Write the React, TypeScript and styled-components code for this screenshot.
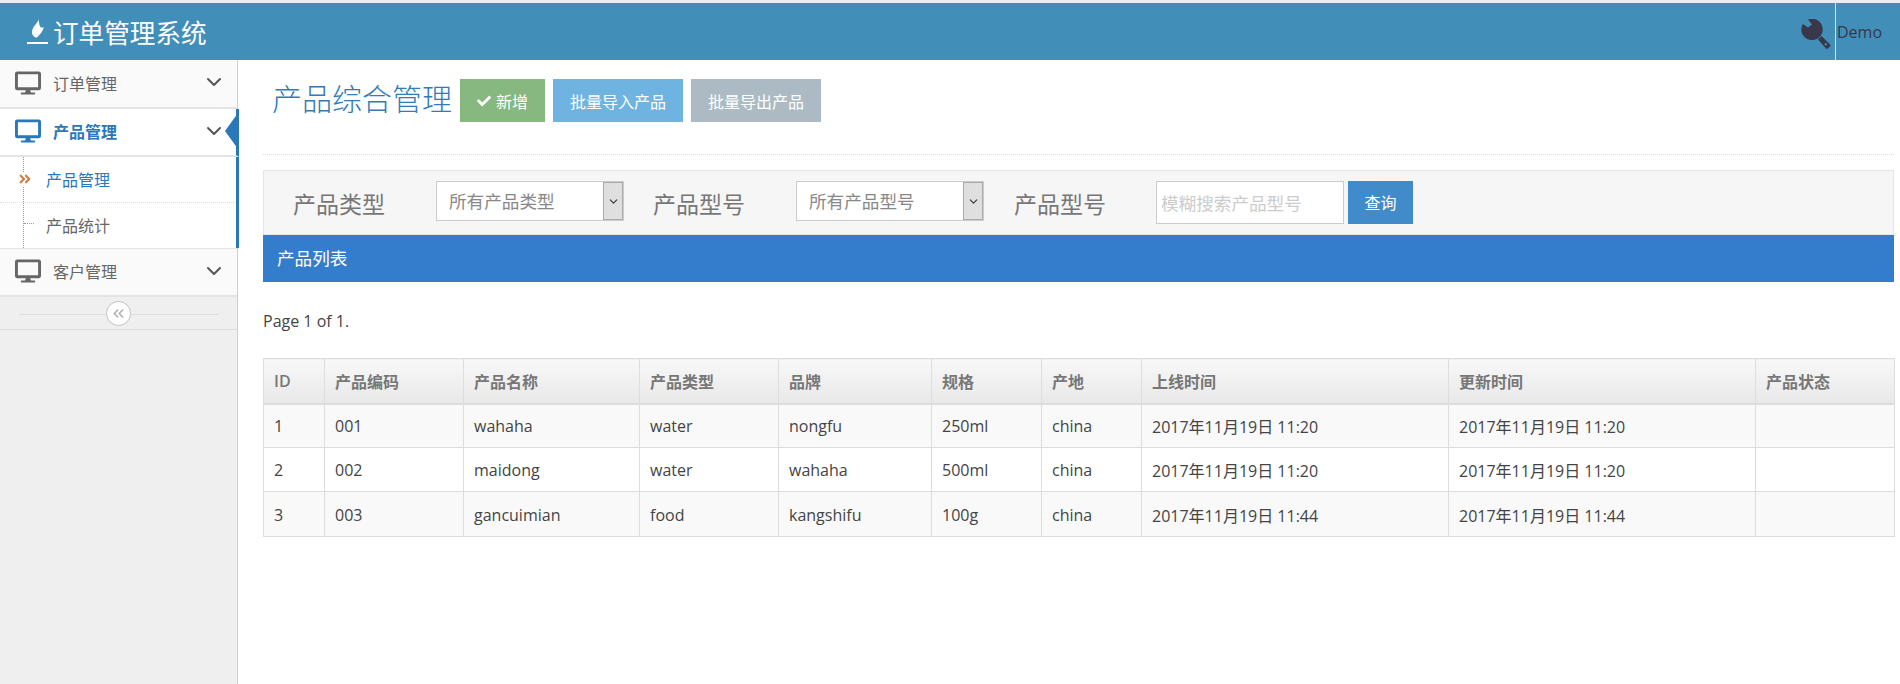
import React from "react";
import styled, { createGlobalStyle } from "styled-components";
import { FaDesktop, FaCheck, FaAngleDoubleRight } from "react-icons/fa";
import { FiChevronDown, FiChevronsLeft } from "react-icons/fi";

const Global = createGlobalStyle`
  html, body { margin: 0; padding: 0; background: #fff; }
  body { font-family: "Open Sans", "Noto Sans CJK SC", sans-serif; font-size: 16px; color: #444; }
  * { box-sizing: border-box; }
`;

const Page = styled.div`
  height: 684px;
  display: flex;
  flex-direction: column;
  overflow: hidden;
  border-top: 3px solid #ececec;
`;
const Header = styled.header`
  height: 57px;
  flex: none;
  background: #418fb9;
  display: flex;
  align-items: stretch;
  justify-content: space-between;
  padding-left: 27px;
`;
const Brand = styled.div`
  display: flex;
  align-items: center;
  gap: 5px;
  color: #fff;
  font-size: 25.6px;
`;
const UserArea = styled.div`
  display: flex;
  align-items: center;
  color: #38384a;
`;
const WrenchWrap = styled.div`
  display: flex;
  margin: 4px 4px 0 0;
`;
const DemoLabel = styled.div`
  height: 100%;
  display: flex;
  align-items: center;
  padding: 0 18px 0 1px;
  border-left: 1px solid #d5e3ec;
`;
const Body = styled.div`
  flex: 1;
  display: flex;
  min-height: 0;
`;
const Sidebar = styled.aside`
  width: 238px;
  flex: none;
  background: #efefef;
  border-right: 1px solid #cfcfcf;
`;
const MenuRow = styled.div<{ $active?: boolean; $topRule?: boolean }>`
  position: relative;
  height: ${(p) => (p.$active ? "48px" : "49px")};
  display: flex;
  align-items: center;
  padding: 0 ${(p) => (p.$active ? "10px" : "11px")} 2px 15px;
  background: ${(p) => (p.$active ? "#fff" : "#fafafa")};
  border-bottom: 2px solid #e4e4e4;
  ${(p) => (p.$topRule ? "border-top: 1px solid #e4e4e4;" : "")}
  color: ${(p) => (p.$active ? "#2b78b8" : "#666")};
  font-weight: ${(p) => (p.$active ? 600 : 400)};
  margin-right: ${(p) => (p.$active ? "-2px" : "0")};
  ${(p) => (p.$active ? "border-right: 3px solid #2b78b8;" : "")}
`;
const MenuIcon = styled.span`
  display: flex;
  width: 26px;
  margin-right: 12px;
  font-size: 26px;
  color: inherit;
`;
const MenuLabel = styled.span`
  flex: 1;
  font-size: 16px;
`;
const Chevron = styled.span`
  display: flex;
  color: #555;
  font-size: 24px;
  margin-top: -1px;
`;
const Pointer = styled.span`
  position: absolute;
  right: -2px;
  top: 4px;
  width: 0;
  height: 0;
  border-top: 18px solid transparent;
  border-bottom: 18px solid transparent;
  border-right: 13px solid #2b78b8;
`;
const SubMenu = styled.div`
  position: relative;
  background: #fff;
  border-right: 3px solid #2b78b8;
  margin-right: -2px;
  &::before {
    content: "";
    position: absolute;
    left: 23px;
    top: 0;
    bottom: 0;
    border-left: 1px dotted #7f9fc0;
  }
`;
const SubItem = styled.div<{ $active?: boolean; $last?: boolean }>`
  position: relative;
  height: ${(p) => (p.$last ? "45px" : "46px")};
  display: flex;
  align-items: center;
  padding: 0 0 2px 46px;
  color: ${(p) => (p.$active ? "#2b78b8" : "#666")};
  border-bottom: ${(p) => (p.$last ? "0" : "1px dotted #ddd")};
  ${(p) =>
    p.$last
      ? `&::before { content: ""; position: absolute; left: 24px; top: 20px; width: 10px; border-top: 1px dotted #7f9fc0; }`
      : ""}
`;
const ActiveMark = styled.span`
  position: absolute;
  left: 18px;
  top: 15px;
  display: flex;
  color: #c9824a;
  font-size: 14px;
  background: #fff;
`;
const CollapseRow = styled.div`
  position: relative;
  height: 33px;
  display: flex;
  align-items: center;
  justify-content: center;
  border-bottom: 1px solid #ddd;
  &::before {
    content: "";
    position: absolute;
    left: 19px;
    right: 19px;
    top: 17px;
    border-top: 1px solid #ddd;
  }
`;
const CollapseButton = styled.span`
  position: relative;
  width: 25px;
  height: 25px;
  border-radius: 50%;
  border: 1px solid #c4c0c0;
  background: #fff;
  color: #aaa;
  display: flex;
  align-items: center;
  justify-content: center;
  font-size: 17px;
`;
const Main = styled.main`
  flex: 1;
  min-width: 0;
  padding: 0 6px 0 25px;
`;
const TitleRow = styled.div`
  display: flex;
  align-items: center;
  gap: 8px;
  padding: 19px 0 32px 9px;
  height: 95px;
  border-bottom: 1px dotted #ddd;
`;
const Title = styled.h1`
  margin: -4px 0 0;
  font-size: 30px;
  font-weight: 300;
  color: #337ab7;
  line-height: 43px;
  width: 180px;
`;
const ActionButton = styled.button<{ $bg: string }>`
  height: 43px;
  border: 0;
  padding: 0 17px;
  background: ${(p) => p.$bg};
  color: #fff;
  font: inherit;
  font-size: 16px;
  display: flex;
  align-items: center;
  gap: 5px;
`;
const FilterBar = styled.div`
  margin-top: 15px;
  height: 65px;
  display: flex;
  align-items: flex-start;
  padding: 10px 0 0 29px;
  background: #f6f6f6;
  border: 1px solid #e6e6e6;
`;
const FilterLabel = styled.span<{ $width: number }>`
  width: ${(p) => p.$width}px;
  flex: none;
  font-size: 23px;
  line-height: 46px;
  color: #777;
`;
const SelectBox = styled.div<{ $gap: number }>`
  width: 188px;
  height: 40px;
  flex: none;
  display: flex;
  border: 1px solid #ccc;
  background: #fff;
  margin-right: ${(p) => p.$gap}px;
`;
const SelectText = styled.span`
  flex: 1;
  padding-left: 12px;
  font-size: 17.6px;
  line-height: 38px;
  color: #888;
`;
const SelectArrow = styled.span`
  width: 20px;
  display: flex;
  align-items: center;
  justify-content: center;
  background: #dfdfdf;
  border: 1px solid #aaa;
  font-size: 13px;
  color: #333;
`;
const SearchInput = styled.input`
  width: 188px;
  height: 43px;
  flex: none;
  border: 1px solid #ccc;
  background: #fff;
  padding: 0 4px;
  font: inherit;
  font-size: 17.6px;
  &::placeholder { color: #ccc; opacity: 1; }
`;
const SearchButton = styled.button`
  width: 65px;
  height: 43px;
  flex: none;
  margin-left: 4px;
  border: 0;
  padding: 0 0 2px;
  background: #428bca;
  color: #fff;
  font: inherit;
  font-size: 16px;
`;
const ListBar = styled.div`
  height: 47px;
  background: #337dcc;
  color: #fff;
  font-size: 17.6px;
  line-height: 46px;
  padding-left: 14px;
`;
const PageInfo = styled.p`
  margin: 27px 0 25px;
  line-height: 24px;
  color: #444;
`;
const Table = styled.table`
  width: 1631px;
  table-layout: fixed;
  border-collapse: collapse;
`;
const HeadCell = styled.th<{ $w: number }>`
  width: ${(p) => p.$w}px;
  height: 45px;
  padding: 0 10px;
  text-align: left;
  font-weight: 600;
  color: #777;
  border: 1px solid #ddd;
  border-bottom: 2px solid #ddd;
  background: linear-gradient(#f8f8f8, #e8e8e8);
`;
const Row = styled.tr<{ $odd: boolean; $last: boolean }>`
  background: ${(p) => (p.$odd ? "#f9f9f9" : "#fff")};
  height: ${(p) => (p.$last ? "45px" : "44px")};
  ${(p) => (p.$last ? "td { padding-top: 2px; }" : "")}
`;
const Cell = styled.td`
  padding: 0 10px;
  border: 1px solid #ddd;
  color: #444;
  white-space: nowrap;
`;

const Flame = () => (
  <svg width="21" height="26" viewBox="0 0 21 26" fill="#fff">
    <path d="M11 0C12 4 5 7 5 13C5 16 7 18.5 10 18.5C12 16 16 13 16.7 7.7C15.5 9 14 9 13 7.5C12 6 12.5 3 11 0Z" />
    <rect x="0" y="23" width="21" height="2" />
  </svg>
);
const Wrench = () => (
  <svg width="30" height="30" viewBox="0 0 30 30" fill="#38384a" fillRule="evenodd">
    <path d="M7 .5L11 5.5L7 8.5L1.8 5A10.7 10.7 0 1 0 7 .5Z" />
    <path d="M17 20.5L20.5 17L29 25.5a1.5 1.5 0 0 1 0 2L27 29.5a1.5 1.5 0 0 1-2 0ZM24.7 24.1a1.2 1.2 0 1 0 .01 0Z" />
  </svg>
);

const columns: [string, number][] = [
  ["ID", 61], ["产品编码", 139], ["产品名称", 176], ["产品类型", 139], ["品牌", 153],
  ["规格", 110], ["产地", 100], ["上线时间", 307], ["更新时间", 307], ["产品状态", 139],
];
const rows = [
  ["1", "001", "wahaha", "water", "nongfu", "250ml", "china", "2017年11月19日 11:20", "2017年11月19日 11:20", ""],
  ["2", "002", "maidong", "water", "wahaha", "500ml", "china", "2017年11月19日 11:20", "2017年11月19日 11:20", ""],
  ["3", "003", "gancuimian", "food", "kangshifu", "100g", "china", "2017年11月19日 11:44", "2017年11月19日 11:44", ""],
];

export default function App() {
  return (
    <Page>
      <Global />
      <Header>
        <Brand><Flame />订单管理系统</Brand>
        <UserArea>
          <WrenchWrap><Wrench /></WrenchWrap>
          <DemoLabel>Demo</DemoLabel>
        </UserArea>
      </Header>
      <Body>
        <Sidebar>
          <MenuRow>
            <MenuIcon><FaDesktop /></MenuIcon>
            <MenuLabel>订单管理</MenuLabel>
            <Chevron><FiChevronDown /></Chevron>
          </MenuRow>
          <MenuRow $active>
            <MenuIcon><FaDesktop /></MenuIcon>
            <MenuLabel>产品管理</MenuLabel>
            <Chevron><FiChevronDown /></Chevron>
            <Pointer />
          </MenuRow>
          <SubMenu>
            <SubItem $active>
              <ActiveMark><FaAngleDoubleRight /></ActiveMark>
              产品管理
            </SubItem>
            <SubItem $last>产品统计</SubItem>
          </SubMenu>
          <MenuRow $topRule>
            <MenuIcon><FaDesktop /></MenuIcon>
            <MenuLabel>客户管理</MenuLabel>
            <Chevron><FiChevronDown /></Chevron>
          </MenuRow>
          <CollapseRow>
            <CollapseButton><FiChevronsLeft /></CollapseButton>
          </CollapseRow>
        </Sidebar>
        <Main>
          <TitleRow>
            <Title>产品综合管理</Title>
            <ActionButton $bg="#87b87f"><FaCheck size={14} />新增</ActionButton>
            <ActionButton $bg="#6fb3e0">批量导入产品</ActionButton>
            <ActionButton $bg="#abbac3">批量导出产品</ActionButton>
          </TitleRow>
          <FilterBar>
            <FilterLabel $width={143}>产品类型</FilterLabel>
            <SelectBox $gap={29}>
              <SelectText>所有产品类型</SelectText>
              <SelectArrow><FiChevronDown /></SelectArrow>
            </SelectBox>
            <FilterLabel $width={143}>产品型号</FilterLabel>
            <SelectBox $gap={30}>
              <SelectText>所有产品型号</SelectText>
              <SelectArrow><FiChevronDown /></SelectArrow>
            </SelectBox>
            <FilterLabel $width={142}>产品型号</FilterLabel>
            <SearchInput placeholder="模糊搜索产品型号" />
            <SearchButton>查询</SearchButton>
          </FilterBar>
          <ListBar>产品列表</ListBar>
          <PageInfo>Page 1 of 1.</PageInfo>
          <Table>
            <thead>
              <tr>
                {columns.map(([name, w]) => (
                  <HeadCell key={name} $w={w}>{name}</HeadCell>
                ))}
              </tr>
            </thead>
            <tbody>
              {rows.map((r, i) => (
                <Row key={r[0]} $odd={i % 2 === 0} $last={i === rows.length - 1}>
                  {r.map((c, j) => <Cell key={j}>{c}</Cell>)}
                </Row>
              ))}
            </tbody>
          </Table>
        </Main>
      </Body>
    </Page>
  );
}
